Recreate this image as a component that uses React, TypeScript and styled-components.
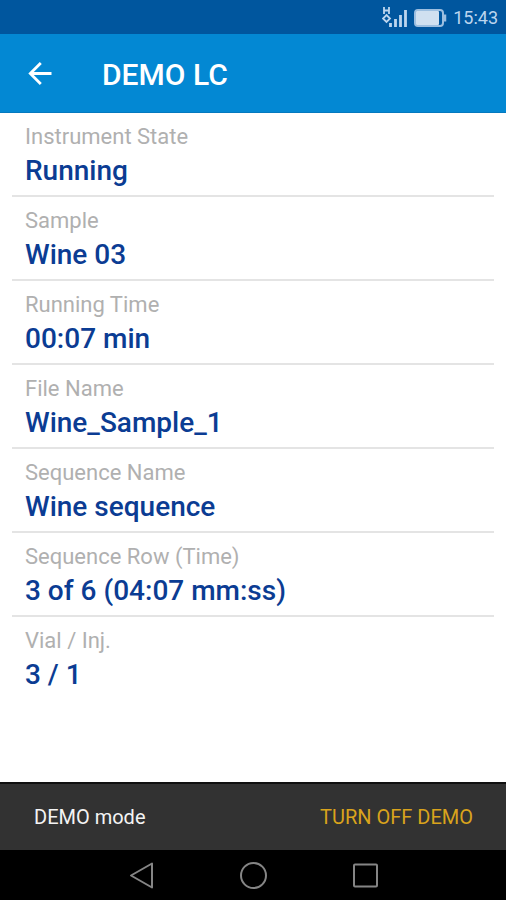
import React from "react";
import styled, { createGlobalStyle } from "styled-components";

const GlobalStyle = createGlobalStyle`
  *, *::before, *::after { box-sizing: border-box; }
  body {
    margin: 0;
    background: #ffffff;
    font-family: Roboto, "Noto Sans", sans-serif;
  }
  button { border: 0; padding: 0; background: none; font: inherit; color: inherit; cursor: pointer; }
`;

const Screen = styled.div`
  display: flex;
  flex-direction: column;
  min-height: 100vh;
`;

const StatusBar = styled.div`
  display: flex;
  align-items: center;
  justify-content: flex-end;
  gap: 6px;
  height: 34px;
  padding: 2px 8px 0;
  background: #00569e;
  color: #bcd5ee;
`;

const Clock = styled.time`
  font-size: 18px;
  line-height: 20px;
`;

const AppBar = styled.header`
  display: flex;
  align-items: center;
  gap: 48px;
  height: 79px;
  padding: 0 26px;
  border-bottom: 1px solid #0479bf;
  background: #0388d3;
  color: #ffffff;
`;

const IconButton = styled.button`
  display: flex;
  align-items: center;
  justify-content: center;
  width: 28px;
  height: 48px;
`;

const Title = styled.h1`
  margin: 0;
  padding-top: 4px;
  font-size: 30px;
  line-height: 36px;
  font-weight: 500;
`;

const Details = styled.dl`
  flex: 1;
  margin: 0;
  padding: 0 12px;
`;

const Row = styled.div`
  height: 84px;
  padding: 8px 13px 0;
  border-bottom: 2px solid #e4e4e4;

  &:last-child { border-bottom: 0; }
`;

const Label = styled.dt`
  color: #b0b0b0;
  font-size: 22px;
  line-height: 32px;
`;

const Value = styled.dd`
  margin: 0;
  color: #0b3c93;
  font-size: 28px;
  line-height: 36px;
  font-weight: 500;
`;

const Snackbar = styled.div`
  display: flex;
  align-items: center;
  justify-content: space-between;
  height: 68px;
  padding: 0 33px 0 34px;
  border-top: 2px solid #101010;
  background: #323232;
  color: #f4f4f4;
  font-size: 20px;
  line-height: 24px;
`;

const Action = styled.button`
  height: 48px;
  color: #d9a31c;
`;

const NavBar = styled.nav`
  display: flex;
  align-items: center;
  justify-content: center;
  gap: 84px;
  height: 50px;
  background: #000000;
  color: #858585;
`;

const fields = [
  { label: "Instrument State", value: "Running" },
  { label: "Sample", value: "Wine 03" },
  { label: "Running Time", value: "00:07 min" },
  { label: "File Name", value: "Wine_Sample_1" },
  { label: "Sequence Name", value: "Wine sequence" },
  { label: "Sequence Row (Time)", value: "3 of 6 (04:07 mm:ss)" },
  { label: "Vial / Inj.", value: "3 / 1" },
];

function SignalIcon() {
  return (
    <svg width="26" height="22" viewBox="0 0 26 22" fill="none" stroke="currentColor" aria-label="Mobile signal" role="img">
      <path d="M2 0v7M7 0v7M2 3.5h5" strokeWidth="1.8" />
      <path d="M4.5 8 8 11.500 4.500 15 1 11.500Z" strokeWidth="1.800" />
      <path d="M8.500 16v4M13.500 12v8M18.500 8v12M23.500 3v17" strokeWidth="2.800" />
    </svg>
  );
}

function BatteryIcon() {
  return (
    <svg width="33" height="18" viewBox="0 0 33 18" fill="none" aria-label="Battery" role="img">
      <rect x="1" y="1" width="28" height="16" rx="3" stroke="#9dbfe0" strokeWidth="2" />
      <rect x="2" y="2" width="23" height="14" rx="1" fill="#d0e0f0" />
      <path d="M31 5.500v7" stroke="#9dbfe0" strokeWidth="2.500" />
    </svg>
  );
}

function BackArrowIcon() {
  return (
    <svg width="28" height="28" viewBox="0 0 28 28" fill="none" stroke="currentColor" strokeWidth="2.800" aria-hidden="true">
      <path d="M25.500 14.500H4M14.800 4 4.300 14.500 14.800 25" />
    </svg>
  );
}

function NavIcon({ children }: { children: React.ReactNode }) {
  return (
    <svg width="28" height="28" viewBox="0 0 28 28" fill="none" stroke="currentColor" strokeWidth="2" strokeLinejoin="round" aria-hidden="true">
      {children}
    </svg>
  );
}

export default function App() {
  return (
    <Screen>
      <GlobalStyle />
      <StatusBar>
        <SignalIcon />
        <BatteryIcon />
        <Clock>15:43</Clock>
      </StatusBar>
      <AppBar>
        <IconButton aria-label="Back">
          <BackArrowIcon />
        </IconButton>
        <Title>DEMO LC</Title>
      </AppBar>
      <Details>
        {fields.map(({ label, value }) => (
          <Row key={label}>
            <Label>{label}</Label>
            <Value>{value}</Value>
          </Row>
        ))}
      </Details>
      <Snackbar>
        <span>DEMO mode</span>
        <Action>TURN OFF DEMO</Action>
      </Snackbar>
      <NavBar>
        <IconButton aria-label="Back">
          <NavIcon><path d="M4 14.500 25 2.500v24Z" /></NavIcon>
        </IconButton>
        <IconButton aria-label="Home">
          <NavIcon><circle cx="14.500" cy="14.500" r="12.500" /></NavIcon>
        </IconButton>
        <IconButton aria-label="Recent apps">
          <NavIcon><rect x="3" y="3.500" width="23" height="22" rx="1" /></NavIcon>
        </IconButton>
      </NavBar>
    </Screen>
  );
}
